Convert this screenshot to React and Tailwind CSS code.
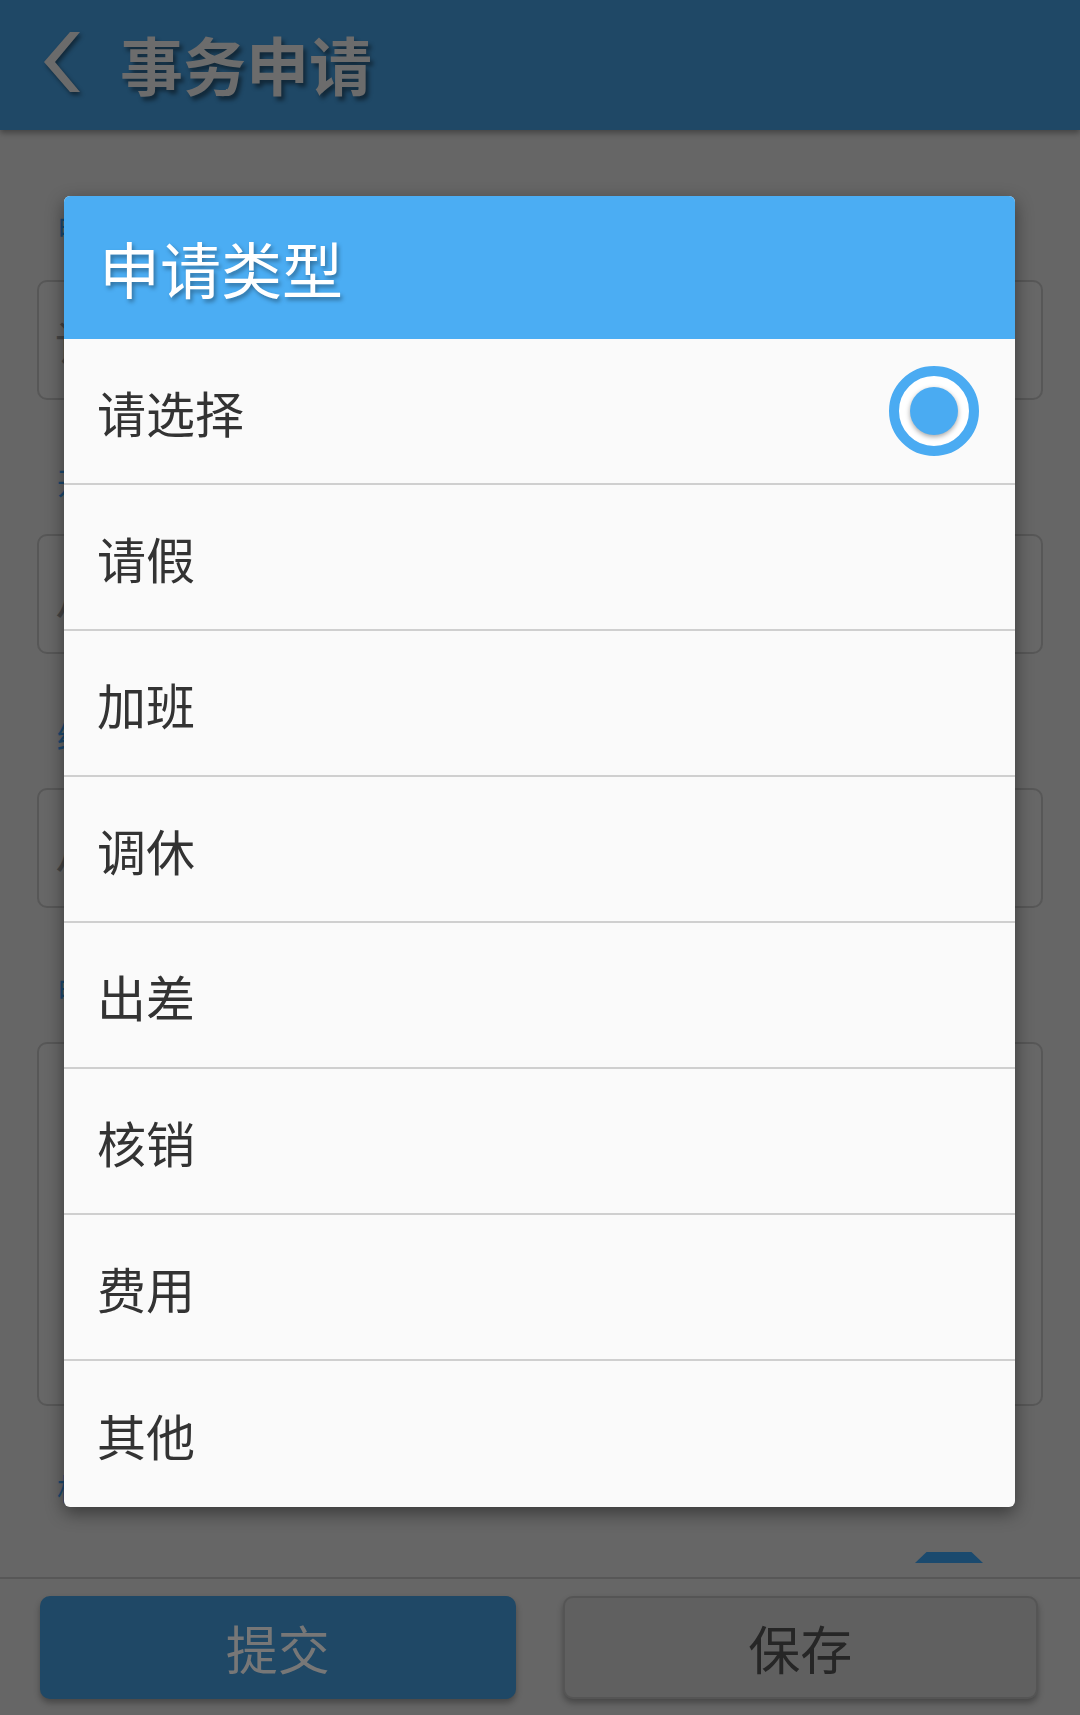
import React from "react";

const fields = [
  { label: "申请类型", value: "请选择", tall: false },
  { label: "开始时间", value: "从", tall: false },
  { label: "结束时间", value: "从", tall: false },
  { label: "申请事由", value: "", tall: true },
];

const options = ["请选择", "请假", "加班", "调休", "出差", "核销", "费用", "其他"];

const RadioMark = () => (
  <div className="w-[90px] h-[90px] rounded-full border-[10px] border-[#4aabf2] bg-white flex items-center justify-center">
    <div className="w-[48px] h-[48px] rounded-full bg-[#4aabf2] shadow-[0_2px_5px_rgba(0,0,0,0.35)]"></div>
  </div>
);

const App = () => {
  return (
    <div className="relative w-[1080px] h-[1715px] overflow-hidden bg-[#666666] flex flex-col font-['Noto_Sans_CJK_SC','Noto_Sans',sans-serif]">
      {/* header bar (dimmed) */}
      <div className="relative z-10 h-[130px] shrink-0 bg-[#1f4866] flex items-center pb-[6px] shadow-[0_3px_6px_rgba(0,0,0,0.35)]">
        <svg width="40" height="60" viewBox="0 0 40 60" className="ml-[42px] drop-shadow-[2px_3px_2px_rgba(0,0,0,0.45)]">
          <polygon points="28,0 38,0 13,30 38,60 28,60 2,30" fill="#6b6b6b" />
        </svg>
        <h1 className="ml-[38px] text-[63px] leading-none font-bold text-[#6c6c6c] [text-shadow:3px_4px_4px_rgba(0,0,0,0.45)]">
          事务申请
        </h1>
      </div>

      {/* form content behind the dialog */}
      <div className="flex-1 overflow-hidden px-[37px] pt-[82px]">
        {fields.map((f, i) => (
          <div key={i} className={i === 0 ? "" : "mt-[66px]"}>
            <div className="pl-[20px] text-[30px] leading-[30px] text-[#1d4a70]">{f.label}</div>
            <div
              className={`mt-[38px] rounded-[10px] border-2 border-[#575757] bg-[#676767] flex ${
                f.tall ? "h-[364px] items-start pt-[30px]" : "h-[120px] items-center"
              } pl-[16px]`}
            >
              <span className="text-[46px] leading-none text-[#444444]">{f.value}</span>
            </div>
          </div>
        ))}
        <div className="mt-[66px] pl-[20px] text-[30px] leading-[30px] text-[#1d4a70]">相关附件</div>
        <div className="mt-[50px] flex justify-end pr-[60px]">
          <div className="w-[68px] h-[11px] bg-[#1b4a6e] [clip-path:polygon(17%_0,83%_0,100%_100%,0_100%)]"></div>
        </div>
      </div>

      {/* bottom action bar */}
      <div className="h-[138px] shrink-0 border-t-2 border-[#575757] bg-[#666666] pl-[40px] pr-[42px] pt-[17px]">
        <div className="grid grid-cols-2 gap-[47px]">
          <button className="h-[103px] rounded-[10px] bg-[#1f4866] text-[52px] text-[#777777] shadow-[0_4px_6px_rgba(0,0,0,0.3)]">
            提交
          </button>
          <button className="h-[103px] rounded-[10px] border-2 border-[#555555] bg-[#606060] text-[52px] text-[#262626] shadow-[0_4px_6px_rgba(0,0,0,0.3)]">
            保存
          </button>
        </div>
      </div>

      {/* selection dialog */}
      <div className="absolute left-[64px] top-[196px] w-[951px] rounded-[6px] overflow-hidden bg-[#fafafa] shadow-[0_6px_18px_rgba(0,0,0,0.45)]">
        <div className="h-[143px] bg-[#4badf3] flex items-center pl-[35px]">
          <span className="text-[61px] leading-none text-white [text-shadow:2px_3px_4px_rgba(0,0,0,0.35)]">申请类型</span>
        </div>
        {options.map((opt, i) => (
          <div
            key={opt}
            className={`h-[146px] flex items-center justify-between pl-[33px] pr-[36px] ${
              i < options.length - 1 ? "border-b-2 border-[#cfcfcf]" : ""
            }`}
          >
            <span className="text-[49px] leading-none text-[#333333]">{opt}</span>
            {i === 0 && <RadioMark />}
          </div>
        ))}
      </div>
    </div>
  );
};

export default App;
